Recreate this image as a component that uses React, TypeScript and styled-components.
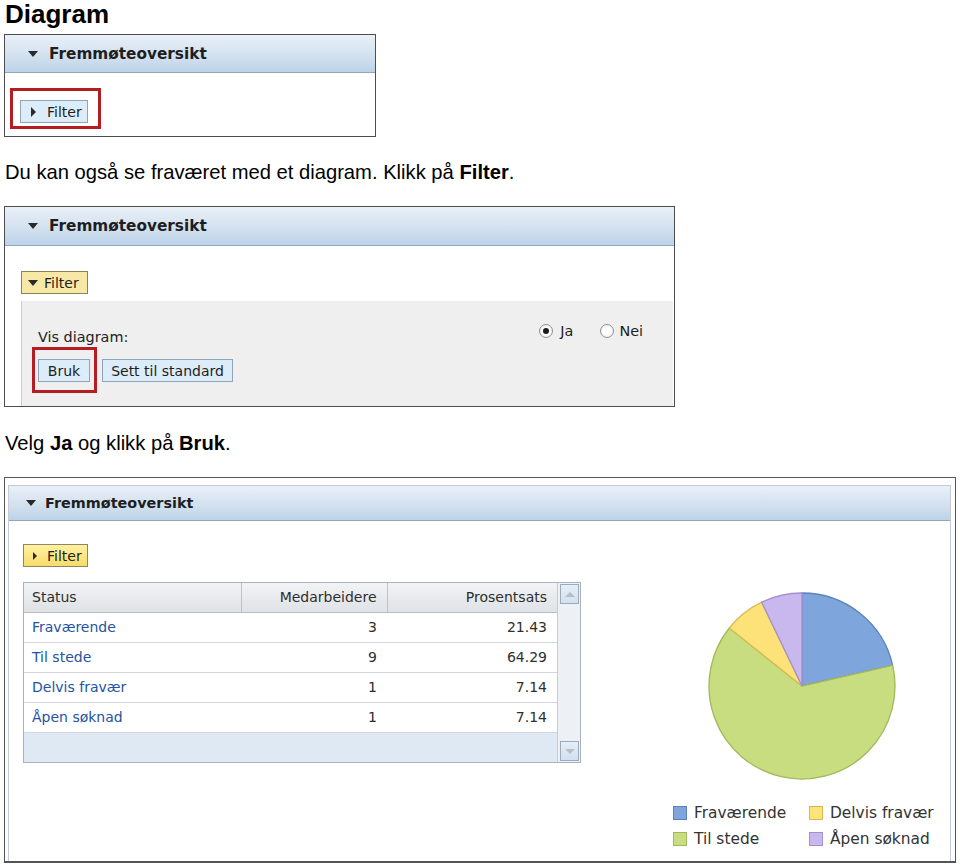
import React from "react"
import styled, { createGlobalStyle } from "styled-components"

type Tone = "blue" | "yellow" | "gold"

type Row = {
  status: string
  employees: number
  percent: string
}

type Slice = {
  label: string
  value: number
  fill: string
  stroke: string
}

const rows: Row[] = [
  { status: "Fraværende", employees: 3, percent: "21.43" },
  { status: "Til stede", employees: 9, percent: "64.29" },
  { status: "Delvis fravær", employees: 1, percent: "7.14" },
  { status: "Åpen søknad", employees: 1, percent: "7.14" },
]

const slices: Slice[] = [
  { label: "Fraværende", value: 21.43, fill: "#7ea6dd", stroke: "#5b82bd" },
  { label: "Til stede", value: 64.29, fill: "#c8dc80", stroke: "#a3b85c" },
  { label: "Delvis fravær", value: 7.14, fill: "#fde27a", stroke: "#d9bb50" },
  { label: "Åpen søknad", value: 7.14, fill: "#c9b8ee", stroke: "#a390cf" },
]

// legend reads row by row: Fraværende, Delvis fravær / Til stede, Åpen søknad
const legendOrder = [0, 2, 1, 3]

const GlobalStyle = createGlobalStyle`
  html, body {
    margin: 0;
    padding: 0;
    background: #fff;
  }
  body {
    font-family: "Liberation Sans", Arial, sans-serif;
    color: #000;
  }
`

const Page = styled.div`
  width: 960px;
  height: 866px;
  box-sizing: border-box;
  padding-left: 4px;
  overflow: hidden;
`

const Title = styled.h1`
  margin: 0 0 6px 1px;
  font-size: 26px;
  line-height: 28px;
  font-weight: bold;
`

const Caption = styled.p<{ $top: number; $bottom: number }>`
  margin: ${p => p.$top}px 0 ${p => p.$bottom}px 1px;
  font-size: 20.2px;
  line-height: 23px;

  b {
    font-weight: bold;
  }
`

const Shot = styled.div<{ $width: number; $height: number }>`
  width: ${p => p.$width}px;
  height: ${p => p.$height}px;
  box-sizing: border-box;
  border: 1px solid #4d4d4d;
  background: #fff;
  display: flex;
  flex-direction: column;
  font-family: "DejaVu Sans", Verdana, sans-serif;
  color: #222;
`

const OuterShot = styled(Shot)`
  padding: 7px 4px 0 3px;
  border-bottom-width: 2px;
  border-color: #555;
`

const Panel = styled.div`
  flex: 1;
  display: flex;
  flex-direction: column;
  border: 1px solid #c3ccd6;
  border-bottom: none;
`

const PanelHeader = styled.div<{ $height: number; $indent: number; $gap: number; $size: number }>`
  height: ${p => p.$height}px;
  box-sizing: border-box;
  flex: none;
  display: flex;
  align-items: center;
  gap: ${p => p.$gap}px;
  padding-left: ${p => p.$indent}px;
  background: linear-gradient(#e9f0f8, #d3e1ef 55%, #bdd3e9);
  border-bottom: 1px solid #8ea6bf;
  font-size: ${p => p.$size}px;
  font-weight: bold;
  color: #1e1e1e;
`

const DownArrow = styled.span<{ $size: number }>`
  width: 0;
  height: 0;
  border-left: ${p => p.$size}px solid transparent;
  border-right: ${p => p.$size}px solid transparent;
  border-top: ${p => Math.round(p.$size * 1.1)}px solid #2a2a2a;
`

const RightArrow = styled.span<{ $size: number }>`
  width: 0;
  height: 0;
  border-top: ${p => p.$size}px solid transparent;
  border-bottom: ${p => p.$size}px solid transparent;
  border-left: ${p => Math.round(p.$size * 0.9)}px solid #2a2a2a;
`

const Body = styled.div<{ $pad: string }>`
  flex: 1;
  display: flex;
  flex-direction: column;
  align-items: flex-start;
  padding: ${p => p.$pad};
`

const Highlight = styled.div<{ $pad: string }>`
  border: 3px solid #b51d22;
  padding: ${p => p.$pad};
  display: flex;
`

const toneStyles: Record<Tone, string> = {
  blue: "background: #dcedf9; border-color: #8fa5b9;",
  yellow: "background: #f7e8a6; border-color: #8c8258;",
  gold: "background: linear-gradient(#fff1a0, #f7dc6c); border-color: #8f8560;",
}

const UiButton = styled.button<{ $tone: Tone; $width: number; $indent?: number; $gap?: number }>`
  width: ${p => p.$width}px;
  height: 23px;
  box-sizing: border-box;
  border: 1px solid;
  ${p => toneStyles[p.$tone]}
  padding: 0 0 0 ${p => p.$indent ?? 8}px;
  display: flex;
  align-items: center;
  gap: ${p => p.$gap ?? 8}px;
  font-family: "DejaVu Sans", Verdana, sans-serif;
  font-size: 14px;
  color: #1e1e1e;
  cursor: pointer;
`

const PlainButton = styled(UiButton)`
  justify-content: center;
  padding: 0;
`

const FilterArea = styled.div`
  align-self: stretch;
  flex: 1;
  margin-top: 7px;
  background: #efefef;
  border-left: 1px solid #c9cdd1;
  padding: 22px 30px 0 16px;
`

const OptionRow = styled.div`
  display: flex;
  align-items: center;
  height: 16px;
  font-size: 14.4px;
`

const OptionLabel = styled.span`
  flex: 1;
  position: relative;
  top: 6px;
`

const Radio = styled.label<{ $gap: number }>`
  display: flex;
  align-items: center;
  gap: ${p => p.$gap}px;
  margin-left: 27px;
  color: #1e1e1e;
`

const RadioDot = styled.span<{ $checked?: boolean }>`
  width: 14px;
  height: 14px;
  box-sizing: border-box;
  border-radius: 50%;
  border: 1px solid #8f9296;
  background: radial-gradient(circle, #fff 40%, #e2e2e2);
  display: flex;
  align-items: center;
  justify-content: center;

  &::after {
    content: "";
    width: 6px;
    height: 6px;
    border-radius: 50%;
    background: ${p => (p.$checked ? "#1a1a1a" : "transparent")};
  }
`

const ButtonRow = styled.div`
  display: flex;
  align-items: flex-start;
  gap: 5px;
  margin: 8px 0 0 -6px;
`

const PushDown = styled.div`
  margin-top: 12px;
`

const Content = styled.div`
  display: flex;
  margin-top: 15px;
  align-self: stretch;
`

const Grid = styled.div`
  display: flex;
  width: 558px;
  height: 181px;
  box-sizing: border-box;
  border: 1px solid #a9b3bd;
  flex: none;
  overflow: hidden;
`

const Table = styled.table`
  width: 533px;
  flex: none;
  border-collapse: collapse;
  table-layout: fixed;
  font-size: 14px;
  color: #2e2e2e;
`

const HeadCell = styled.th<{ $align: "left" | "right"; $width: number }>`
  width: ${p => p.$width}px;
  box-sizing: border-box;
  height: 29px;
  padding: 0 10px 0 8px;
  text-align: ${p => p.$align};
  font-weight: normal;
  background: linear-gradient(#f1f3f5, #dfe2e6);
  border-bottom: 1px solid #b7bdc3;
  border-left: 1px solid #bcc2c8;

  &:first-child {
    border-left: none;
  }
`

const Cell = styled.td<{ $align: "left" | "right" }>`
  height: 29px;
  padding: 0 10px 0 8px;
  text-align: ${p => p.$align};
  border-bottom: 1px solid #d3d7db;
  white-space: nowrap;
`

const StatusLink = styled.a`
  color: #24549f;
  text-decoration: none;
`

const EmptyRow = styled.td`
  height: 29px;
  background: #dfe9f3;
`

const Scrollbar = styled.div`
  flex: 1;
  display: flex;
  flex-direction: column;
  justify-content: space-between;
  padding: 1px 1px 1px 2px;
  background: #edf1f6;
  border-left: 1px solid #c3ccd6;
`

const ScrollButton = styled.div<{ $up?: boolean }>`
  height: 20px;
  box-sizing: border-box;
  border: 1px solid #9aabbd;
  background: linear-gradient(#e6eef7, #d3e0ee);
  display: flex;
  align-items: center;
  justify-content: center;

  &::after {
    content: "";
    border-left: 5px solid transparent;
    border-right: 5px solid transparent;
    ${p =>
      p.$up
        ? "border-bottom: 5px solid #b5bfca;"
        : "border-top: 5px solid #b5bfca;"}
  }
`

const Chart = styled.div`
  margin-left: 86px;
  width: 270px;
  display: flex;
  flex-direction: column;
`

const Legend = styled.div`
  display: grid;
  grid-template-columns: 136px 1fr;
  grid-auto-rows: 26px;
  margin: 18px 0 0 6px;
  font-size: 15.4px;
  color: #333;
`

const LegendItem = styled.div`
  display: flex;
  align-items: center;
  gap: 7px;
`

const Swatch = styled.span<{ $fill: string; $stroke: string }>`
  width: 14px;
  height: 14px;
  box-sizing: border-box;
  background: ${p => p.$fill};
  border: 1px solid ${p => p.$stroke};
`

function slicePath(cx: number, cy: number, r: number, from: number, to: number) {
  let a0 = (from / 100) * Math.PI * 2 - Math.PI / 2
  let a1 = (to / 100) * Math.PI * 2 - Math.PI / 2
  let x0 = cx + r * Math.cos(a0)
  let y0 = cy + r * Math.sin(a0)
  let x1 = cx + r * Math.cos(a1)
  let y1 = cy + r * Math.sin(a1)
  let large = to - from > 50 ? 1 : 0
  return `M${cx},${cy} L${x0.toFixed(2)},${y0.toFixed(2)} A${r},${r} 0 ${large} 1 ${x1.toFixed(2)},${y1.toFixed(2)} Z`
}

function PieChart() {
  let total = slices.reduce((sum, s) => sum + s.value, 0)
  let acc = 0
  return (
    <svg width="270" height="200" viewBox="0 0 270 200">
      {slices.map(s => {
        let from = (acc / total) * 100
        acc += s.value
        let to = (acc / total) * 100
        return (
          <path
            key={s.label}
            d={slicePath(135, 104, 93, from, to)}
            fill={s.fill}
            stroke={s.stroke}
            strokeWidth="1.3"
            strokeLinejoin="round"
          />
        )
      })}
    </svg>
  )
}

type HeaderProps = { height: number; indent: number; gap: number; size: number }

function Header({ height, indent, gap, size }: HeaderProps) {
  return (
    <PanelHeader $height={height} $indent={indent} $gap={gap} $size={size}>
      <DownArrow $size={5} />
      Fremmøteoversikt
    </PanelHeader>
  )
}

function CollapsedShot() {
  return (
    <Shot $width={372} $height={103}>
      <Header height={38} indent={23} gap={11} size={15.3} />
      <Body $pad="15px 0 0 5px">
        <Highlight $pad="9px 10px 3px 7px">
          <UiButton $tone="blue" $width={68} $indent={10} $gap={11}>
            <RightArrow $size={5} />
            Filter
          </UiButton>
        </Highlight>
      </Body>
    </Shot>
  )
}

function FilterShot() {
  return (
    <Shot $width={671} $height={201}>
      <Header height={39} indent={23} gap={11} size={15.3} />
      <Body $pad="25px 1px 0 16px">
        <UiButton $tone="yellow" $width={67} $indent={6} $gap={6}>
          <DownArrow $size={5} />
          Filter
        </UiButton>
        <FilterArea>
          <OptionRow>
            <OptionLabel>Vis diagram:</OptionLabel>
            <Radio $gap={7}>
              <RadioDot $checked />
              Ja
            </Radio>
            <Radio $gap={5}>
              <RadioDot />
              Nei
            </Radio>
          </OptionRow>
          <ButtonRow>
            <Highlight $pad="9px 4px 8px 3px">
              <PlainButton $tone="blue" $width={52}>
                Bruk
              </PlainButton>
            </Highlight>
            <PushDown>
              <PlainButton $tone="blue" $width={131}>
                Sett til standard
              </PlainButton>
            </PushDown>
          </ButtonRow>
        </FilterArea>
      </Body>
    </Shot>
  )
}

function ChartShot() {
  return (
    <OuterShot $width={952} $height={386}>
      <Panel>
        <Header height={35} indent={17} gap={9} size={14.4} />
        <Body $pad="23px 0 0 14px">
          <UiButton $tone="gold" $width={65} $indent={9} $gap={10}>
            <RightArrow $size={4} />
            Filter
          </UiButton>
          <Content>
            <Grid>
              <Table>
                <thead>
                  <tr>
                    <HeadCell $align="left" $width={217}>Status</HeadCell>
                    <HeadCell $align="right" $width={146}>Medarbeidere</HeadCell>
                    <HeadCell $align="right" $width={170}>Prosentsats</HeadCell>
                  </tr>
                </thead>
                <tbody>
                  {rows.map(r => (
                    <tr key={r.status}>
                      <Cell $align="left">
                        <StatusLink href="#">{r.status}</StatusLink>
                      </Cell>
                      <Cell $align="right">{r.employees}</Cell>
                      <Cell $align="right">{r.percent}</Cell>
                    </tr>
                  ))}
                  <tr>
                    <EmptyRow colSpan={3} />
                  </tr>
                </tbody>
              </Table>
              <Scrollbar>
                <ScrollButton $up />
                <ScrollButton />
              </Scrollbar>
            </Grid>
            <Chart>
              <PieChart />
              <Legend>
                {legendOrder.map(i => (
                  <LegendItem key={slices[i].label}>
                    <Swatch $fill={slices[i].fill} $stroke={slices[i].stroke} />
                    {slices[i].label}
                  </LegendItem>
                ))}
              </Legend>
            </Chart>
          </Content>
        </Body>
      </Panel>
    </OuterShot>
  )
}

export default function App() {
  return (
    <Page>
      <GlobalStyle />
      <Title>Diagram</Title>
      <CollapsedShot />
      <Caption $top={24} $bottom={22}>
        Du kan også se fraværet med et diagram. Klikk på <b>Filter</b>.
      </Caption>
      <FilterShot />
      <Caption $top={25} $bottom={22}>
        Velg <b>Ja</b> og klikk på <b>Bruk</b>.
      </Caption>
      <ChartShot />
    </Page>
  )
}
